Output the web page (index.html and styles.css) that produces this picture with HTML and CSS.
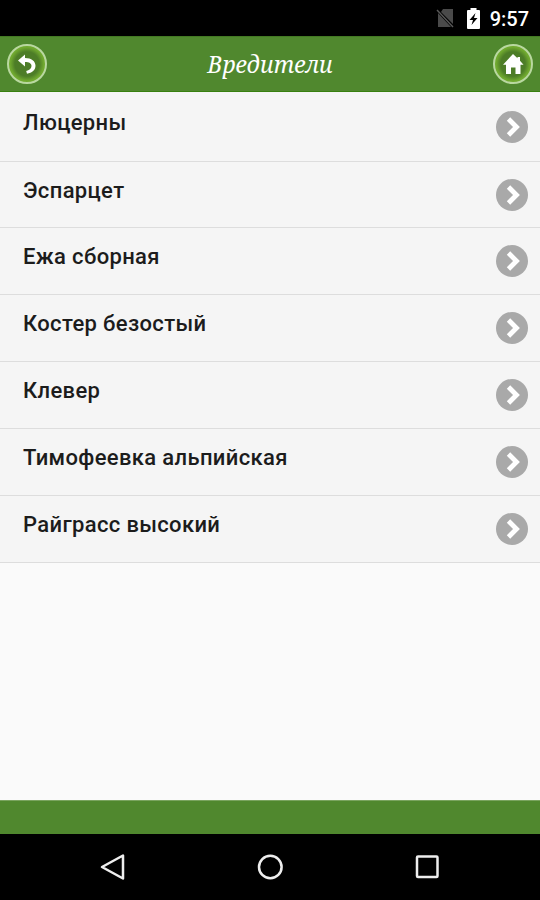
FILE: index.html
```html
<!DOCTYPE html>
<html lang="ru">
<head>
    <meta charset="UTF-8">
    <meta name="viewport" content="width=device-width, initial-scale=1.0">
    <title>Вредители</title>
    <link rel="stylesheet" href="styles.css">
</head>
<body>
    <div class="status-bar">
        <svg class="no-sim" width="19" height="21" viewBox="0 0 19 21">
            <path d="M7 1h10v15L5 4z M2 5l13 14H2z" fill="#4a4a4a"/>
            <path d="M1 2l16 17" stroke="#5a5a5a" stroke-width="1.4"/>
        </svg>
        <svg class="battery" width="15" height="21" viewBox="0 0 15 21">
            <path d="M4.500 0h6v2H13q1 0 1 1v17q0 1-1 1H2q-1 0-1-1V3q0-1 1-1h2.500z" fill="#fff"/>
            <path d="M9.500 5L3.500 12h3.500L5.500 17l6-7H8z" fill="#000"/>
        </svg>
        <span class="time">9:57</span>
    </div>

    <div class="header">
        <a class="round-btn">
            <svg width="24" height="24" viewBox="0 0 24 24">
                <path d="M3 8.500L10 2.500v3.500c6.500 0 10.500 3.300 10.500 7.800 0 4.200-3.500 7.200-8.500 7.900l-.8-2.800c3-.7 5.300-2.300 5.300-4.900 0-2.500-2.200-4-6.500-4v4.500z" fill="#fff"/>
            </svg>
        </a>
        <h1>Вредители</h1>
        <a class="round-btn">
            <svg width="24" height="24" viewBox="0 0 24 24">
                <path d="M12 2l4.500 4.300V5h2.500v3.700l3.500 4h-3V22h-5v-6.500h-4.500V22H5v-9.300H2z" fill="#fff"/>
            </svg>
        </a>
    </div>

    <!-- Список культур -->
    <ul class="list">
        <li><span>Люцерны</span><i class="arrow"><svg viewBox="0 0 32 32"><path d="M12.500 8l8 8-8 8"/></svg></i></li>
        <li><span>Эспарцет</span><i class="arrow"><svg viewBox="0 0 32 32"><path d="M12.500 8l8 8-8 8"/></svg></i></li>
        <li><span>Ежа сборная</span><i class="arrow"><svg viewBox="0 0 32 32"><path d="M12.500 8l8 8-8 8"/></svg></i></li>
        <li><span>Костер безостый</span><i class="arrow"><svg viewBox="0 0 32 32"><path d="M12.500 8l8 8-8 8"/></svg></i></li>
        <li><span>Клевер</span><i class="arrow"><svg viewBox="0 0 32 32"><path d="M12.500 8l8 8-8 8"/></svg></i></li>
        <li><span>Тимофеевка альпийская</span><i class="arrow"><svg viewBox="0 0 32 32"><path d="M12.500 8l8 8-8 8"/></svg></i></li>
        <li><span>Райграсс высокий</span><i class="arrow"><svg viewBox="0 0 32 32"><path d="M12.500 8l8 8-8 8"/></svg></i></li>
    </ul>

    <div class="footer"></div>

    <div class="nav-bar">
        <svg width="28" height="28" viewBox="0 0 28 28"><path d="M3 14L24 2.500v23z"/></svg>
        <svg width="28" height="28" viewBox="0 0 28 28"><circle cx="14.300" cy="14" r="11.300"/></svg>
        <svg width="28" height="28" viewBox="0 0 28 28"><rect x="4" y="3.500" width="20.500" height="20.500" rx="1"/></svg>
    </div>
</body>
</html>
```

FILE: styles.css
```css
* {
    margin: 0;
    padding: 0;
    box-sizing: border-box;
}

body {
    display: flex;
    flex-direction: column;
    height: 100vh;
    background: #fafafa;
    font-family: Roboto, sans-serif;
    overflow: hidden;
}

svg {
    display: block;
}

.status-bar {
    display: flex;
    justify-content: flex-end;
    align-items: center;
    height: 36px;
    padding-right: 11px;
    background: #000;
    color: #fff;
}

.battery {
    margin: 0 9px 0 11px;
}

.time {
    font-size: 20px;
    font-weight: 500;
    padding-top: 2px;
}

.header {
    display: flex;
    justify-content: space-between;
    align-items: center;
    height: 56px;
    padding: 0 7px;
    background: #50882e;
    border-top: 1px solid #437923;
    border-bottom: 1px solid #38800f;
}

.header h1 {
    color: #fff;
    font-family: "Noto Serif", "Liberation Serif", serif;
    font-size: 23px;
    font-style: italic;
    font-weight: 400;
}

.round-btn {
    display: flex;
    justify-content: center;
    align-items: center;
    width: 40px;
    height: 40px;
    border: 2px solid #b9d8a0;
    border-radius: 50%;
    background: radial-gradient(circle, #4d7d27 48%, #70a92f 66%);
}

.list {
    flex: 1;
    list-style: none;
}

.list li {
    display: flex;
    justify-content: space-between;
    height: 66.9px;
    padding: 15px 12px 0 23px;
    background: #f5f5f5;
    border-bottom: 1px solid #ddd;
}

.list li:first-child {
    height: 69.5px;
    padding-top: 17px;
}

.list span {
    color: #1c1c1c;
    font-size: 22px;
    font-weight: 500;
    line-height: 27px;
    letter-spacing: 0.35px;
}

.arrow {
    width: 32px;
    height: 32px;
    margin-top: 2px;
    border-radius: 50%;
    background: #a9a9a9;
}

.arrow path {
    fill: none;
    stroke: #fff;
    stroke-width: 4.8;
}

.footer {
    height: 34px;
    background: #50882e;
    border-top: 1px solid #7aa45f;
}

.nav-bar {
    display: flex;
    justify-content: center;
    align-items: center;
    gap: 129px;
    height: 66px;
    background: #000;
}

.nav-bar path,
.nav-bar circle,
.nav-bar rect {
    fill: none;
    stroke: #eee;
    stroke-width: 2.5;
    stroke-linejoin: round;
}
```
